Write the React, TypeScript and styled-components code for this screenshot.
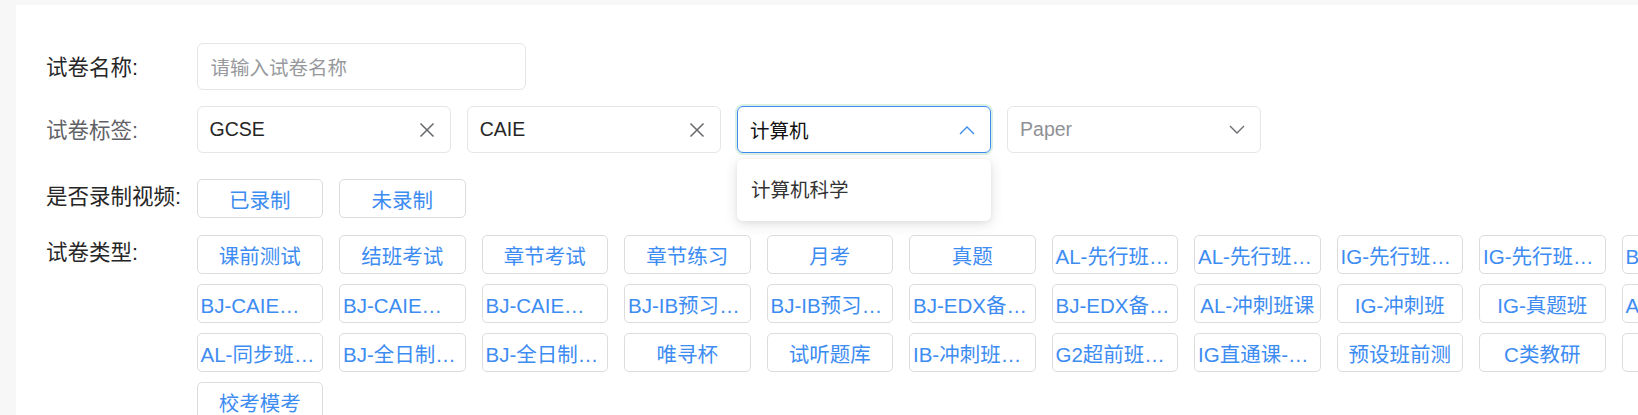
import React from "react";
import styled, { createGlobalStyle } from "styled-components";

const GlobalStyle = createGlobalStyle`
  html, body {
    margin: 0;
    padding: 0;
    background: #f7f7f7;
    overflow: hidden;
  }
  body {
    font-family: "Liberation Sans", "Noto Sans CJK SC", sans-serif;
  }
  * { box-sizing: border-box; }
`;

const Page = styled.div`
  padding: 5px 0 0 16px;
  width: max-content;
`;

const Panel = styled.div`
  background: #ffffff;
  min-height: 420px;
  padding: 38px 40px 0 30px;
`;

const FormRow = styled.div<{ $gapBelow?: number }>`
  display: flex;
  align-items: flex-start;
  margin-bottom: ${(p) => p.$gapBelow ?? 16}px;
`;

const Label = styled.div<{ $line: number; $muted?: boolean }>`
  width: 150.5px;
  height: ${(p) => p.$line}px;
  padding-top: 2px;
  flex: none;
  font-size: 21.5px;
  line-height: ${(p) => p.$line}px;
  color: ${(p) => (p.$muted ? "#5f6166" : "#262626")};
  white-space: nowrap;
`;

const TextInput = styled.div`
  width: 329px;
  height: 47px;
  border: 1px solid #e6e6e6;
  border-radius: 6px;
  padding: 0 13px;
  display: flex;
  align-items: center;
  font-size: 19.5px;
  color: #97999d;
`;

const SelectRow = styled.div`
  display: flex;
  gap: 16.2px;
`;

const SelectBox = styled.div<{ $focused?: boolean }>`
  position: relative;
  width: 254px;
  height: 47px;
  border: 1px solid ${(p) => (p.$focused ? "#3d8cf0" : "#e6e6e6")};
  border-radius: 6px;
  box-shadow: ${(p) => (p.$focused ? "0 0 0 2px #dcefe4" : "none")};
  padding: 0 15px 0 12px;
  display: flex;
  align-items: center;
  justify-content: space-between;
`;

const SelectValue = styled.span<{ $placeholder?: boolean; $strong?: boolean }>`
  font-size: 19.5px;
  color: ${(p) => (p.$placeholder ? "#8f9196" : p.$strong ? "#111111" : "#262626")};
`;

const IconSlot = styled.span`
  display: flex;
  align-items: center;
  justify-content: center;
  width: 16px;
  height: 16px;
`;

const Dropdown = styled.div`
  position: absolute;
  top: calc(100% + 7px);
  left: -1px;
  width: 254px;
  background: #ffffff;
  border-radius: 6px;
  box-shadow: 0 3px 14px rgba(0, 0, 0, 0.12), 0 1px 4px rgba(0, 0, 0, 0.05);
  padding: 6px 0;
  z-index: 10;
`;

const Option = styled.div`
  height: 50px;
  line-height: 50px;
  padding: 0 14px;
  font-size: 19.5px;
  color: #333333;
`;

const ChoiceRow = styled.div`
  display: flex;
  gap: 16px;
`;

const TagGrid = styled.div`
  display: flex;
  flex-wrap: wrap;
  gap: 9.7px 16px;
  width: 1551.5px;
`;

const TagButton = styled.button`
  width: 126.5px;
  height: 39.3px;
  flex: none;
  border: 1px solid #dcdcdc;
  border-radius: 5px;
  background: #ffffff;
  padding: 0 3px;
  font-family: inherit;
  font-size: 20.5px;
  color: #3d8cf2;
  text-align: center;
  white-space: nowrap;
  overflow: hidden;
  text-overflow: ellipsis;
  cursor: pointer;
`;

const CloseIcon = () => (
  <svg width="16" height="16" viewBox="0 0 16 16">
    <path d="M1.5 1.5 L14.5 14.5 M14.5 1.5 L1.5 14.5" stroke="#66686b" strokeWidth="1.5" fill="none" />
  </svg>
);

const ChevronIcon = ({ up, color }: { up?: boolean; color: string }) => (
  <svg width="16" height="10" viewBox="0 0 16 10">
    <path
      d={up ? "M1 9 L8 2 L15 9" : "M1 1 L8 8 L15 1"}
      stroke={color}
      strokeWidth="1.4"
      fill="none"
    />
  </svg>
);

const paperTypes = [
  "课前测试", "结班考试", "章节考试", "章节练习", "月考", "真题",
  "AL-先行班课前测", "AL-先行班课后测", "IG-先行班课前测", "IG-先行班课后测", "BJ-先行班课前测",
  "BJ-CAIE预习班", "BJ-CAIE冲刺班", "BJ-CAIE全日制", "BJ-IB预习班课前测", "BJ-IB预习班课后测",
  "BJ-EDX备考班", "BJ-EDX备考课", "AL-冲刺班课", "IG-冲刺班", "IG-真题班", "AL-真题班课程",
  "AL-同步班课程", "BJ-全日制课前测", "BJ-全日制课后测", "唯寻杯", "试听题库", "IB-冲刺班课程",
  "G2超前班课程", "IG直通课-测试", "预设班前测", "C类教研", "其他",
  "校考模考",
];

export default function App() {
  return (
    <>
      <GlobalStyle />
      <Page>
        <Panel>
          <FormRow $gapBelow={16}>
            <Label $line={47}>试卷名称:</Label>
            <TextInput>请输入试卷名称</TextInput>
          </FormRow>

          <FormRow $gapBelow={26}>
            <Label $line={47} $muted>试卷标签:</Label>
            <SelectRow>
              <SelectBox>
                <SelectValue>GCSE</SelectValue>
                <IconSlot><CloseIcon /></IconSlot>
              </SelectBox>
              <SelectBox>
                <SelectValue>CAIE</SelectValue>
                <IconSlot><CloseIcon /></IconSlot>
              </SelectBox>
              <SelectBox $focused>
                <SelectValue $strong>计算机</SelectValue>
                <IconSlot><ChevronIcon up color="#3d8cf0" /></IconSlot>
                <Dropdown>
                  <Option>计算机科学</Option>
                </Dropdown>
              </SelectBox>
              <SelectBox>
                <SelectValue $placeholder>Paper</SelectValue>
                <IconSlot><ChevronIcon color="#6b6d70" /></IconSlot>
              </SelectBox>
            </SelectRow>
          </FormRow>

          <FormRow $gapBelow={16.7}>
            <Label $line={32}>是否录制视频:</Label>
            <ChoiceRow>
              <TagButton>已录制</TagButton>
              <TagButton>未录制</TagButton>
            </ChoiceRow>
          </FormRow>

          <FormRow $gapBelow={0}>
            <Label $line={32}>试卷类型:</Label>
            <TagGrid>
              {paperTypes.map((t, i) => (
                <TagButton key={i} title={t}>{t}</TagButton>
              ))}
            </TagGrid>
          </FormRow>
        </Panel>
      </Page>
    </>
  );
}
